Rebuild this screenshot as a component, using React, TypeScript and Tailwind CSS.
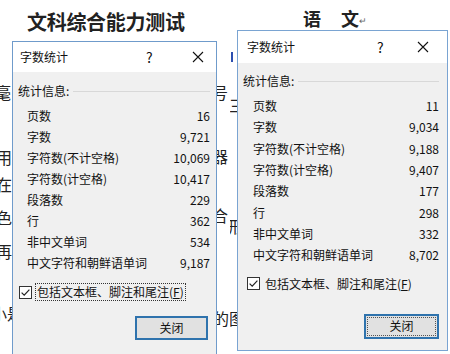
import React from "react";

type Row = [string, string];

const leftRows: Row[] = [
  ["页数", "16"],
  ["字数", "9,721"],
  ["字符数(不计空格)", "10,069"],
  ["字符数(计空格)", "10,417"],
  ["段落数", "229"],
  ["行", "362"],
  ["非中文单词", "534"],
  ["中文字符和朝鲜语单词", "9,187"],
];

const rightRows: Row[] = [
  ["页数", "11"],
  ["字数", "9,034"],
  ["字符数(不计空格)", "9,188"],
  ["字符数(计空格)", "9,407"],
  ["段落数", "177"],
  ["行", "298"],
  ["非中文单词", "332"],
  ["中文字符和朝鲜语单词", "8,702"],
];

const font = { fontFamily: '"Noto Sans CJK SC", "Noto Sans", sans-serif' };

function CloseX() {
  return (
    <svg width="12" height="12" viewBox="0 0 12 12">
      <path d="M1 1 L11 11 M11 1 L1 11" stroke="#111" strokeWidth="1.1" fill="none" />
    </svg>
  );
}

function Check() {
  return (
    <svg width="13" height="13" viewBox="0 0 13 13" className="block">
      <rect x="0.5" y="0.5" width="12" height="12" fill="#fff" stroke="#333" />
      <path d="M2.6 6.6 L5.2 9.2 L10.4 3.6" stroke="#222" strokeWidth="1.2" fill="none" />
    </svg>
  );
}

function LeftDialog() {
  return (
    <div className="absolute left-[12px] top-[41px] w-[205px] h-[330px] border border-[#6f9bcb] bg-[#f0f0f0] flex flex-col" style={font}>
      <div className="h-[30px] bg-white flex items-center pl-[7px] text-[12px] text-[#111]">
        <span className="w-[126px]">字数统计</span>
        <span className="text-[14px] w-[46px]">?</span>
        <CloseX />
      </div>
      <div className="flex flex-col pl-[5px] pr-[6px] pt-[9px] text-[12px] text-[#111]">
        <div className="h-[20px] flex items-center gap-[4px]">
          <span>统计信息:</span>
          <div className="flex-1 h-px bg-[#d8d8d8]" />
        </div>
        <div className="mt-[5px] flex flex-col pl-[9px]">
          {leftRows.map(([k, v]) => (
            <div key={k} className="h-[20.9px] flex items-center justify-between">
              <span>{k}</span>
              <span>{v}</span>
            </div>
          ))}
        </div>
        <div className="mt-[9px] h-[20px] flex items-center gap-[3px] pl-[1px]">
          <Check />
          <span className="border border-dotted border-[#333] px-[1px] leading-[16px]">包括文本框、脚注和尾注(<u>F</u>)</span>
        </div>
        <div className="mt-[14px] flex justify-end pr-[2px]">
          <div className="w-[73px] h-[24px] border-2 border-[#2f73ad] bg-[#e1e1e1] flex items-center justify-center">关闭</div>
        </div>
      </div>
    </div>
  );
}

function RightDialog() {
  return (
    <div className="absolute left-[7px] top-[30px] w-[211px] h-[321px] border border-[#7aa4d2] bg-[#f0f0f0] flex flex-col" style={font}>
      <div className="h-[32px] bg-white flex items-center pl-[9px] text-[12px] text-[#111]">
        <span className="w-[130px]">字数统计</span>
        <span className="text-[14px] w-[40px]">?</span>
        <CloseX />
      </div>
      <div className="flex flex-col pl-[5px] pr-[8px] pt-[8px] text-[12px] text-[#111]">
        <div className="h-[20px] flex items-center gap-[4px]">
          <span>统计信息:</span>
          <div className="flex-1 h-px bg-[#d8d8d8]" />
        </div>
        <div className="mt-[4.5px] flex flex-col pl-[10px]">
          {rightRows.map(([k, v]) => (
            <div key={k} className="h-[21.3px] flex items-center justify-between">
              <span>{k}</span>
              <span>{v}</span>
            </div>
          ))}
        </div>
        <div className="mt-[8px] h-[20px] flex items-center gap-[4px] pl-[4px]">
          <Check />
          <span className="px-[1px] leading-[16px]">包括文本框、脚注和尾注(<u>F</u>)</span>
        </div>
        <div className="mt-[20px] flex justify-end">
          <div className="w-[75px] h-[25px] border-2 border-[#2f73ad] bg-[#e1e1e1] p-[1px]">
            <div className="w-full h-full border border-dotted border-[#555] flex items-center justify-center">关闭</div>
          </div>
        </div>
      </div>
    </div>
  );
}

const docChar = "absolute text-[16px] leading-[16px] text-[#222]";

export default function App() {
  return (
    <div className="w-[450px] h-[354px] bg-white flex overflow-hidden" style={font}>
      <div className="relative w-[230px] h-full overflow-hidden">
        <div className="pt-[11px] pl-[27px] text-[20px] leading-[22px] font-bold text-[#222] tracking-[-0.3px]">文科综合能力测试</div>
        <span className={docChar + " left-[-5px] top-[84px]"}>毫</span>
        <span className={docChar + " left-[-4px] top-[149px]"}>用</span>
        <span className={docChar + " left-[-4px] top-[176px]"}>在</span>
        <span className={docChar + " left-[-4px] top-[209px]"}>色</span>
        <span className={docChar + " left-[-4px] top-[243px]"}>再</span>
        <span className={docChar + " left-[-9px] top-[305px]"}>小是</span>
        <span className={docChar + " left-[212px] top-[84px]"}>号</span>
        <span className={docChar + " left-[212px] top-[148px]"}>器</span>
        <span className={docChar + " left-[212px] top-[207px]"}>合</span>
        <span className={docChar + " left-[213px] top-[310px]"}>的</span>
        <LeftDialog />
      </div>
      <div className="relative w-[220px] h-full overflow-hidden">
        <div className="pt-[8px] pl-[73px] flex items-end text-[18px] leading-[20px] font-bold text-[#222]">
          <span>语</span>
          <span className="ml-[20px]">文</span>
          <span className="text-[9px] leading-[10px] font-normal text-[#666] mb-[2px]">↵</span>
        </div>
        <span className={docChar + " left-[-1px] top-[97px]"}>三</span>
        <span className={docChar + " left-[-2px] top-[218px]"}>形</span>
        <span className={docChar + " left-[-1px] top-[310px]"}>图</span>
        <div className="absolute left-[1px] top-[52px] w-[2px] h-[10px] bg-[#2c4fb0]" />
        <RightDialog />
      </div>
    </div>
  );
}
